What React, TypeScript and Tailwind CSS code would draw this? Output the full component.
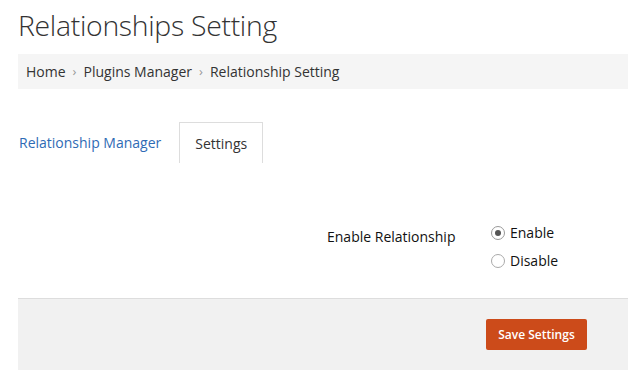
export default function App() {
  return (
    <div className="min-h-[390px] bg-white pl-[18px] font-['Open_Sans',sans-serif] text-[#333]">
      <h1 className="pt-[3px] text-[28.4px] leading-[44px] font-light tracking-[-0.3px] text-[#333]">
        Relationships Setting
      </h1>

      {/* Breadcrumb */}
      <div className="mt-[7px] flex h-[35px] items-center bg-[#f5f5f5] pl-[8px] text-[14px] text-[#333]">
        <span>Home</span>
        <span className="mx-[7px] text-[13px] text-[#999]">›</span>
        <span>Plugins Manager</span>
        <span className="mx-[7px] text-[13px] text-[#999]">›</span>
        <span>Relationship Setting</span>
      </div>

      {/* Tabs */}
      <div className="mt-[33px] flex items-end text-[14px]">
        <div className="flex h-[41px] items-center pl-px pr-[18px] text-[#2f6bb5]">
          Relationship Manager
        </div>
        <div className="flex h-[41px] w-[84px] items-center justify-center border border-b-0 border-[#ddd] text-[#333]">
          Settings
        </div>
      </div>

      {/* Form */}
      <div className="flex h-[135px] items-start pt-[59px] text-[14px] text-[#111]">
        <div className="w-[309px] shrink-0" />
        <div className="w-[164px] pt-[4px]">Enable Relationship</div>
        <div className="flex flex-col gap-[7px]">
          <label className="flex items-center gap-[5px]">
            <span className="flex h-[14px] w-[14px] items-center justify-center rounded-full border border-[#999] bg-white">
              <span className="h-[6px] w-[6px] rounded-full bg-[#555]" />
            </span>
            Enable
          </label>
          <label className="flex items-center gap-[5px]">
            <span className="h-[14px] w-[14px] rounded-full border border-[#aaa] bg-white" />
            Disable
          </label>
        </div>
      </div>

      {/* Footer */}
      <div className="flex h-[72px] items-center border-t border-[#ddd] bg-[#f1f1f1] pl-[468px]">
        <button className="h-[31px] w-[101px] rounded-[2px] bg-[#cc4b1a] text-[12px] font-semibold text-white">
          Save Settings
        </button>
      </div>
    </div>
  )
}
